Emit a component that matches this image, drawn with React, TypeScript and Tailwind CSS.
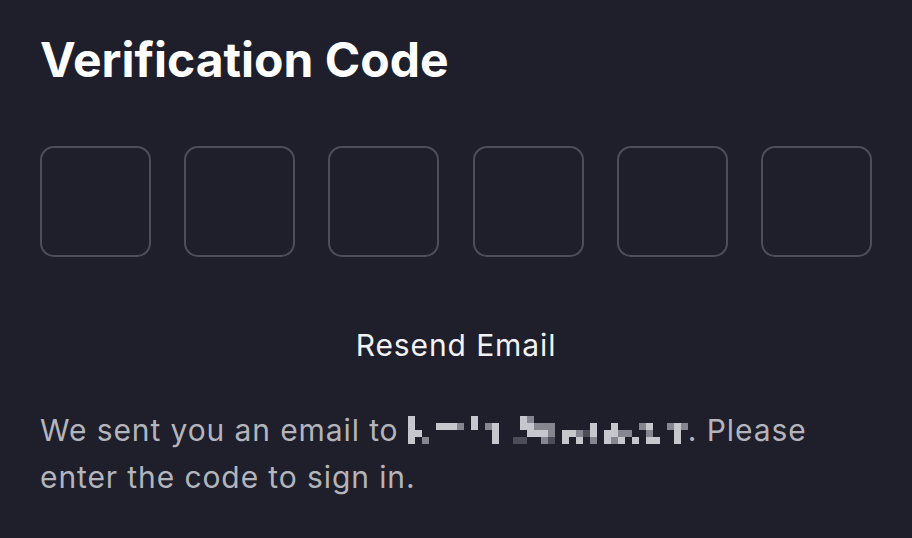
// pixelated (redacted) address, one string per 7px column, top to bottom
const COLS = [
  "cccc", "..c.", "...b", "....", ".c..", ".c..", ".c..", ".b..",
  "....", "cc..", "....", ".b..", ".ccc", "....", "....", "...a",
  "cc.a", "bcc.", ".bc.", ".bcb", ".bba", "....", "..cc", "..c.",
  "..bc", "..a.", ".ccb", "....", "..cc", ".ccb", "..bc", "..b.",
  "...c", ".b..", ".cbc", "...c", "....", ".b..", ".ccc", ".b..",
];

const shade: Record<string, string> = {
  a: "bg-[#4b4c58]",
  b: "bg-[#85868f]",
  c: "bg-[#c6c7cd]",
  ".": "",
};

function RedactedEmail() {
  return (
    <span className="inline-grid grid-flow-col grid-rows-[repeat(4,7px)] auto-cols-[7px] align-[18px]">
      {COLS.flatMap((col, i) =>
        col.split("").map((ch, j) => <span key={`${i}-${j}`} className={shade[ch]} />)
      )}
    </span>
  );
}

export default function App() {
  return (
    <div className="min-h-screen w-full bg-[#1e1f2b] px-10 pt-[31px] font-['Inter',sans-serif]">
      <h1 className="text-[48px] font-bold leading-[58px] text-white">Verification Code</h1>

      <div className="mt-[57px] flex justify-between">
        {Array.from({ length: 6 }).map((_, i) => (
          <div key={i} className="h-[111px] w-[111px] rounded-[14px] border-2 border-[#4d4e59]" />
        ))}
      </div>

      <div className="mt-[70px] text-center text-[30px] leading-[36px] tracking-[0.03em] text-[#f2f2f4]">
        Resend Email
      </div>

      <p className="mt-[44px] text-[30px] leading-[47px] tracking-[0.03em] text-[#b3b4bc]">
        We sent you an email to <RedactedEmail />. Please enter the code to sign in.
      </p>
    </div>
  );
}
